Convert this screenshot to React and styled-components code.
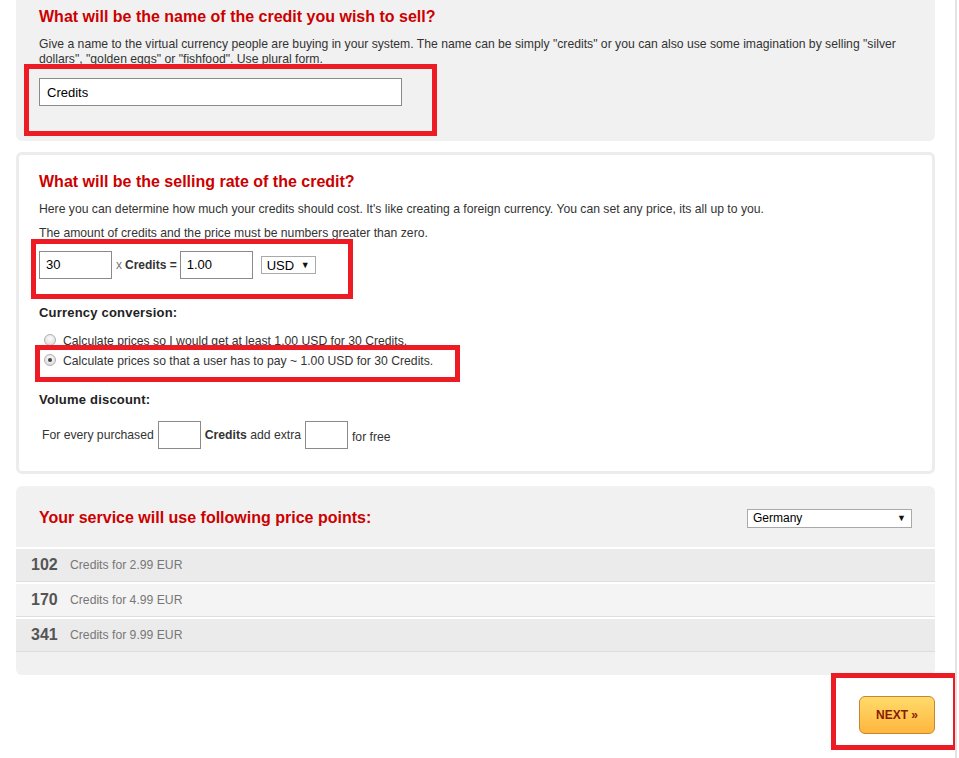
import React from 'react';
import styled, { createGlobalStyle } from 'styled-components';

const GlobalStyle = createGlobalStyle`
    body {
        margin: 0;
        background: #fff;
        font-family: "Liberation Sans", Arial, sans-serif;
        color: #333;
    }
`

const Page = styled.div`
    position: relative;
    width: 955px;
    min-height: 758px;
    border-right: 2px solid #e3e3e3;
    overflow: hidden;
`
const Panel = styled.div`
    margin-left: 16px;
    width: 919px;
    box-sizing: border-box;
    background: ${p => p.white ? '#fff' : '#f1f1f1'};
    border: ${p => p.white ? '3px solid #ececec' : 'none'};
    border-radius: ${p => p.flatTop ? '0 0 6px 6px' : '6px'};
    padding: ${p => p.pad};
    margin-top: ${p => p.top || '0'};
`
const Title = styled.h2`
    margin: 0;
    font-size: 16px;
    line-height: 20px;
    font-weight: bold;
    color: #cc0000;
`
const Text = styled.p`
    margin: ${p => p.top || '10px'} 0 0;
    font-size: 12.2px;
    line-height: 15px;
    color: #333;
`
const NameInput = styled.div`
    margin-top: 11px;
    width: 363px;
    height: 28px;
    box-sizing: border-box;
    border: 1px solid #8a8a8a;
    background: #fff;
    font-size: 13px;
    line-height: 27px;
    padding-left: 7px;
    color: #000;
`
const RateRow = styled.div`
    display: flex;
    align-items: center;
    margin-top: 10px;
    font-size: 12px;
`
const Box = styled.div`
    width: ${p => p.w}px;
    height: 28px;
    box-sizing: border-box;
    border: 1px solid #8a8a8a;
    background: #fff;
    font-size: 13px;
    line-height: 26px;
    padding-left: 6px;
    color: #000;
`
const Times = styled.span`
    color: #777;
    margin: 0 3px 0 4px;
`
const Bold = styled.b`
    color: #333;
    margin-right: ${p => p.mr || '0'};
`
const Select = styled.div`
    display: flex;
    align-items: center;
    justify-content: space-between;
    width: ${p => p.w}px;
    height: ${p => p.h}px;
    box-sizing: border-box;
    border: 1px solid #a9a9a9;
    background: #fff;
    font-size: ${p => p.fs}px;
    color: #000;
    padding: 0 5px;
    margin-left: ${p => p.ml || '0'};
`
const Arrow = styled.span`
    font-size: 9px;
    color: #111;
`
const SubHead = styled.h3`
    margin: ${p => p.top} 0 0;
    font-size: 13px;
    line-height: 16px;
    font-weight: bold;
    color: #222;
    letter-spacing: 0.2px;
`
const RadioList = styled.div`
    margin-top: 10px;
    padding-left: 5px;
`
const RadioRow = styled.label`
    display: flex;
    align-items: center;
    height: 20px;
    font-size: 12.2px;
    color: #333;
`
const Radio = styled.span`
    width: 12px;
    height: 12px;
    border-radius: 50%;
    box-sizing: border-box;
    border: 1px solid #b0b0b0;
    background: radial-gradient(circle at 50% 35%, #fbfbfb, #d6d6d6);
    margin-right: 7px;
    margin-top: -3px;
    display: flex;
    align-items: center;
    justify-content: center;
    &::after {
        content: '';
        width: 4px;
        height: 4px;
        border-radius: 50%;
        background: ${p => p.checked ? '#444' : 'transparent'};
    }
`
const VolumeRow = styled.div`
    display: flex;
    align-items: center;
    margin-top: 13px;
    padding-left: 3px;
    font-size: 12.2px;
    color: #333;
`
const Field = styled.span`
    margin: 0 4px;
`
const Trailing = styled.span`
    padding-top: 4px;
`
const Header = styled.div`
    display: flex;
    align-items: center;
    justify-content: space-between;
    box-sizing: border-box;
    height: 61px;
    padding: 3px 23px 0;
`
const PriceRow = styled.div`
    display: flex;
    align-items: center;
    height: 32px;
    border-top: 2px solid #fff;
    border-bottom: 1px solid #dedede;
    background: ${p => p.light ? '#f4f4f4' : '#ebebeb'};
    padding-left: 15px;
`
const Amount = styled.span`
    width: 39px;
    font-size: 16px;
    font-weight: bold;
    color: #555;
`
const PriceText = styled.span`
    font-size: 12.2px;
    color: #777;
`
const Footer = styled.div`
    display: flex;
    justify-content: flex-end;
    width: 935px;
    margin-top: 21px;
`
const NextButton = styled.button`
    width: 76px;
    height: 38px;
    border: 1px solid #c9852d;
    border-radius: 6px;
    background: linear-gradient(#ffdb6b, #ffb63e);
    color: #8a1a00;
    font-family: "Liberation Sans", Arial, sans-serif;
    font-size: 12px;
    font-weight: bold;
`
const Mark = styled.div`
    position: absolute;
    left: ${p => p.x}px;
    top: ${p => p.y}px;
    width: ${p => p.w}px;
    height: ${p => p.h}px;
    box-sizing: border-box;
    border: 5px solid #ed1c24;
    pointer-events: none;
`

const prices = [
    { n: 102, p: '2.99' },
    { n: 170, p: '4.99' },
    { n: 341, p: '9.99' },
]

export default function App() {
    return (
        <Page>
            <GlobalStyle />
            <Panel flatTop pad="7px 23px 35px">
                <Title>What will be the name of the credit you wish to sell?</Title>
                <Text>Give a name to the virtual currency people are buying in your system. The name can be simply "credits" or you can also use some imagination by selling "silver dollars", "golden eggs" or "fishfood". Use plural form.</Text>
                <NameInput>Credits</NameInput>
            </Panel>

            <Panel white top="11px" pad="17px 20px 22px">
                <Title>What will be the selling rate of the credit?</Title>
                <Text>Here you can determine how much your credits should cost. It's like creating a foreign currency. You can set any price, its all up to you.</Text>
                <Text top="9px">The amount of credits and the price must be numbers greater than zero.</Text>
                <RateRow>
                    <Box w={73}>30</Box>
                    <Times>x</Times>
                    <Bold mr="3px">Credits =</Bold>
                    <Box w={73}>1.00</Box>
                    <Select w={55} h={18} fs={13} ml="8px">USD <Arrow>▼</Arrow></Select>
                </RateRow>
                <SubHead top="26px">Currency conversion:</SubHead>
                <RadioList>
                    <RadioRow><Radio />Calculate prices so I would get at least 1.00 USD for 30 Credits.</RadioRow>
                    <RadioRow><Radio checked />Calculate prices so that a user has to pay ~ 1.00 USD for 30 Credits.</RadioRow>
                </RadioList>
                <SubHead top="21px">Volume discount:</SubHead>
                <VolumeRow>
                    For every purchased
                    <Field><Box w={43} /></Field>
                    <Bold>Credits</Bold>&nbsp;add extra
                    <Field><Box w={43} /></Field>
                    <Trailing>for free</Trailing>
                </VolumeRow>
            </Panel>

            <Panel top="12px" pad="0 0 23px">
                <Header>
                    <Title>Your service will use following price points:</Title>
                    <Select w={165} h={19} fs={12}>Germany <Arrow>▼</Arrow></Select>
                </Header>
                {prices.map((r, i) => (
                    <PriceRow key={r.n} light={i === 1}>
                        <Amount>{r.n}</Amount>
                        <PriceText>Credits for {r.p} EUR</PriceText>
                    </PriceRow>
                ))}
            </Panel>

            <Footer>
                <NextButton>NEXT »</NextButton>
            </Footer>

            <Mark x={24} y={64} w={413} h={72} />
            <Mark x={31} y={239} w={322} h={60} />
            <Mark x={35} y={345} w={425} h={37} />
            <Mark x={831} y={673} w={127} h={77} />
        </Page>
    );
}
